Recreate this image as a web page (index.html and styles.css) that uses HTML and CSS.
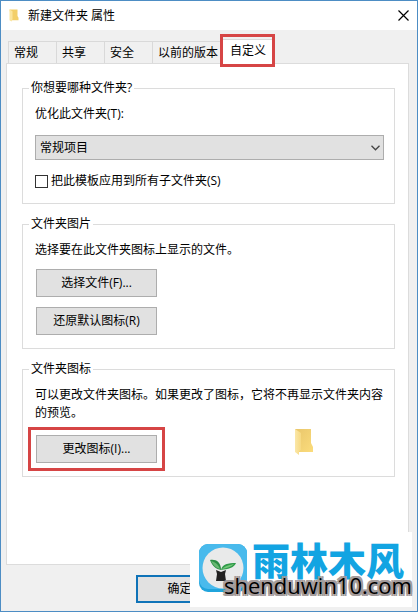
FILE: index.html
```html
<!DOCTYPE html>
<html lang="zh-CN">
<head>
    <meta charset="UTF-8">
    <meta name="viewport" content="width=device-width, initial-scale=1.0">
    <title>新建文件夹 属性</title>
    <link rel="stylesheet" href="styles.css">
</head>
<body>
    <div class="window">
        <header class="title-bar">
            <svg class="title-icon" width="10" height="13" viewBox="0 0 20 28" preserveAspectRatio="none">
                <path d="M1 1h16v14l2 4v5H5z" fill="#f3cf68"/>
                <path d="M1 1l6 4v17l-2 5-4-3z" fill="#fbe59d"/>
            </svg>
            <h1>新建文件夹 属性</h1>
            <button class="close" type="button" aria-label="关闭">
                <svg width="11" height="11" viewBox="0 0 11 11">
                    <path d="M.5.5l10 10M10.500.5l-10 10" fill="none" stroke="#000" stroke-width="1.200"/>
                </svg>
            </button>
        </header>

        <nav class="tabs">
            <button class="tab" type="button">常规</button>
            <button class="tab" type="button">共享</button>
            <button class="tab" type="button">安全</button>
            <button class="tab tab-versions" type="button">以前的版本</button>
            <button class="tab active" type="button">自定义<span class="mark mark-tab"></span></button>
        </nav>

        <main class="panel">
            <fieldset>
                <legend>你想要哪种文件夹?</legend>
                <label class="select-label" for="template">优化此文件夹(T):</label>
                <div class="select-box">
                    <select id="template">
                        <option>常规项目</option>
                    </select>
                    <svg class="chevron" width="9" height="6" viewBox="0 0 9 6">
                        <path d="M.5.8l4 4 4-4" fill="none" stroke="#444" stroke-width="1.300"/>
                    </svg>
                </div>
                <label class="check">
                    <input type="checkbox">
                    <span>把此模板应用到所有子文件夹(S)</span>
                </label>
            </fieldset>

            <fieldset>
                <legend>文件夹图片</legend>
                <p>选择要在此文件夹图标上显示的文件。</p>
                <div class="stack">
                    <button class="btn" type="button">选择文件(F)...</button>
                    <button class="btn" type="button">还原默认图标(R)</button>
                </div>
            </fieldset>

            <fieldset>
                <legend>文件夹图标</legend>
                <p>可以更改文件夹图标。如果更改了图标，它将不再显示文件夹内容的预览。</p>
                <div class="icon-row">
                    <div class="marked">
                        <button class="btn" type="button">更改图标(I)...</button>
                        <span class="mark mark-btn"></span>
                    </div>
                    <svg class="folder" width="20" height="28" viewBox="0 0 20 28">
                        <defs>
                            <linearGradient id="back" x1="0" y1="0" x2="1" y2="1">
                                <stop offset="0" stop-color="#e9c66b"/>
                                <stop offset="1" stop-color="#fbdc7c"/>
                            </linearGradient>
                            <linearGradient id="front" x1="0" y1="0" x2="1" y2="0">
                                <stop offset="0" stop-color="#fbe7a8"/>
                                <stop offset="1" stop-color="#f6d982"/>
                            </linearGradient>
                        </defs>
                        <path d="M1 1h16v14l2 4v5H5z" fill="url(#back)"/>
                        <path d="M1 1l6 4v17l-2 1v4l-4-3z" fill="url(#front)"/>
                    </svg>
                </div>
            </fieldset>
        </main>

        <footer class="actions">
            <button class="btn ok" type="button">确定</button>
        </footer>

        <div class="watermark">
            <svg class="logo" width="48" height="48" viewBox="0 0 48 48">
                <rect width="48" height="48" rx="9" fill="#20a4dc"/>
                <rect width="48" height="45" rx="9" fill="#49baec"/>
                <circle cx="24" cy="24" r="20.500" fill="#e9eaea"/>
                <path d="M22 26c1-6 7-7 15-7-2 5-8 6-15 7z" fill="#2f9a49"/>
                <path d="M23 25c4-4 8-4 12-5-3 3-7 4-12 5z" fill="#73c779"/>
                <path d="M11 16c6-1 11 2 11 10-5-1-8-3-11-10z" fill="#2b8d43"/>
                <path d="M12 17c4 1 7 3 9 8-4-1-7-4-9-8z" fill="#68b872"/>
                <path d="M17 26l5 2 5-2-1 4 1 7H17l1-7z" fill="#222"/>
            </svg>
            <div class="brand">雨林木风</div>
            <div class="site">shenduwin10.com</div>
        </div>
    </div>
</body>
</html>
```

FILE: styles.css
```css
* {
    box-sizing: border-box;
}
body {
    margin: 0;
    background: #f0f0f0;
    color: #000;
    font: 12px/18px "Open Sans", "Noto Sans CJK SC", sans-serif;
}
button, select, input {
    font: inherit;
    color: inherit;
}
h1, p {
    margin: 0;
    font-size: 12px;
    font-weight: normal;
}
.window {
    position: relative;
    min-height: 100vh;
    border: 1px solid #4d8dc4;
    background: #f0f0f0;
}
.title-bar {
    display: flex;
    align-items: center;
    height: 29px;
    padding: 0 8px;
    background: #fff;
}
.title-bar h1 {
    flex: 1;
    margin-left: 9px;
}
.close {
    display: flex;
    padding: 0;
    border: 0;
    background: none;
}
.tabs {
    display: flex;
    align-items: flex-end;
    height: 33px;
    padding-left: 7px;
}
.tab {
    height: 22px;
    padding: 0 18px 0 5px;
    border: 1px solid #d9d9d9;
    border-width: 1px 0 0 1px;
    background: #f0f0f0;
    white-space: nowrap;
}
.tab-versions {
    padding-right: 2px;
}
.tab.active {
    position: relative;
    z-index: 1;
    height: 26px;
    margin-bottom: -2px;
    padding: 0 7px 4px 9px;
    border-right-width: 1px;
    background: #fff;
}
.mark {
    position: absolute;
    border: 3px solid #d64545;
    pointer-events: none;
}
.mark-tab {
    inset: -6px -2px -2px -1px;
}
.mark-btn {
    inset: -8px;
}
.panel {
    min-height: 502px;
    margin: 0 8px 0 5px;
    padding: 15px 13px 0 15px;
    border: 1px solid #dcdcdc;
    background: #fff;
}
fieldset {
    min-width: 0;
    margin: 0 0 11px;
    padding: 8px 10px 13px 12px;
    border: 1px solid #dcdcdc;
}
legend {
    height: 18px;
    margin-left: -6px;
    padding: 0 2px;
}
.select-label {
    display: block;
}
.select-box {
    position: relative;
    margin: 12px 0;
}
select {
    display: block;
    width: 100%;
    height: 25px;
    padding: 0 4px;
    border: 1px solid #adadad;
    border-radius: 0;
    background: #e1e1e1;
    appearance: none;
}
.chevron {
    position: absolute;
    top: 10px;
    right: 4px;
}
.check {
    display: flex;
    align-items: center;
    gap: 3px;
}
.check input {
    width: 13px;
    height: 13px;
    margin: 0;
    border: 1px solid #333;
    background: #fff;
    appearance: none;
}
.stack {
    display: flex;
    flex-direction: column;
    align-items: flex-start;
    gap: 10px;
    padding: 10px 0 0 1px;
}
.btn {
    width: 121px;
    height: 28px;
    padding: 0;
    border: 1px solid #adadad;
    background: #e1e1e1;
}
.icon-row {
    display: flex;
    justify-content: space-between;
    padding: 13px 70px 0 1px;
}
.marked {
    position: relative;
    height: 28px;
}
.folder {
    margin-top: -7px;
}
.actions {
    padding: 10px 0 8px 135px;
}
.ok {
    width: 87px;
    border: 2px solid #0f73b8;
}
.watermark {
    position: absolute;
    right: 5px;
    bottom: 4px;
    width: 222px;
    height: 75px;
    background: #fff;
}
.logo {
    position: absolute;
    top: 12px;
    left: 9px;
}
.brand {
    position: absolute;
    top: 7px;
    left: 62px;
    color: #12a4e2;
    font: 900 38px/40px "Noto Sans CJK SC", sans-serif;
    white-space: nowrap;
}
.site {
    position: absolute;
    top: 37px;
    left: 34px;
    font: 22px/32px "Open Sans", sans-serif;
    text-shadow: 2px 0 #a39b9b, -2px 0 #a39b9b, 0 2px #a39b9b, 0 -2px #a39b9b,
        2px 2px #a39b9b, -2px 2px #a39b9b, 2px -2px #a39b9b, -2px -2px #a39b9b;
    white-space: nowrap;
}
```
